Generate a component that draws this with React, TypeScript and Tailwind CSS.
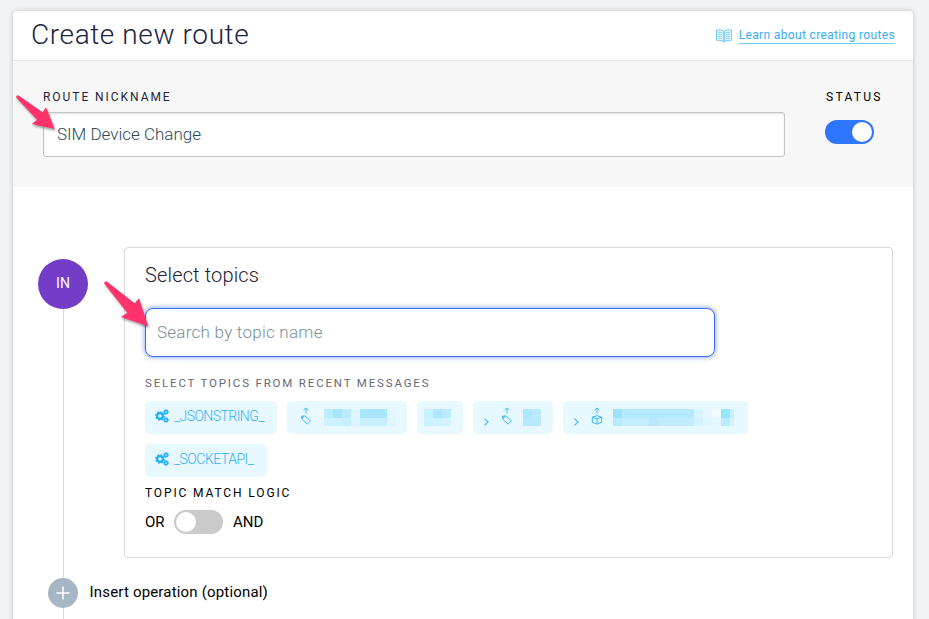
import type { ReactNode } from "react";
import clsx from "clsx";

function GearsIcon() {
  return (
    <svg width="14" height="14" viewBox="0 0 14 14" fill="none" stroke="#1eaefc" aria-hidden="true">
      <circle cx="5" cy="7" r="2.9" strokeWidth="2.2" />
      <circle cx="5" cy="7" r="4.3" strokeWidth="1.1" strokeDasharray="1.8 1.577" />
      <circle cx="11" cy="3" r="1.6" strokeWidth="1.5" />
      <circle cx="11" cy="3" r="2.5" strokeWidth="0.8" strokeDasharray="1.1 0.86" />
      <circle cx="11" cy="11" r="1.6" strokeWidth="1.5" />
      <circle cx="11" cy="11" r="2.5" strokeWidth="0.8" strokeDasharray="1.1 0.86" />
    </svg>
  );
}

function BookIcon() {
  return (
    <svg width="16" height="14" viewBox="0 0 16 14" fill="none" stroke="#4fc0fa" strokeWidth="0.9" aria-hidden="true">
      <path d="M8 2.4C6.3 1.1 3.500.7.6.9v10.400c2.900-.2 5.700.1 7.400 1.400 1.700-1.300 4.500-1.600 7.400-1.400V.9C12.500.7 9.700 1.100 8 2.400z" />
      <path d="M8 2.400v10.800" strokeWidth="1.400" />
      <path d="M2.200 3.100c1.600 0 3 .3 4.200.9M2.200 5.100c1.600 0 3 .3 4.200.9M2.200 7.100c1.600 0 3 .3 4.200.9M2.200 9.100c1.600 0 3 .3 4.200.9M13.800 3.100c-1.600 0-3 .3-4.200.9M13.800 5.100c-1.600 0-3 .3-4.200.9M13.800 7.100c-1.600 0-3 .3-4.200.9M13.800 9.100c-1.600 0-3 .3-4.200.9" />
    </svg>
  );
}

function TagUpIcon() {
  return (
    <svg width="12" height="18" viewBox="0 0 12 18" fill="none" stroke="#43bdf9" aria-hidden="true">
      <path d="M6 6.5V1M3.6 3.2 6 .9l2.400 2.300" />
      <path d="M1.500 9.300 4.700 8.800l5.800 5.100-3.300 3.200-5.300-4.900z" strokeLinejoin="round" />
      <path d="M1.300 9.200 4.900 8.700 2 12.300z" fill="#43bdf9" stroke="none" />
    </svg>
  );
}

function CubeUpIcon() {
  return (
    <svg width="12" height="18" viewBox="0 0 12 18" fill="none" stroke="#35b7fa" aria-hidden="true">
      <path d="M6 6.500V1M3.600 3.200 6 .900l2.400 2.300" />
      <path d="M6 8.600 10.700 10.200v5L6 17.200 1.300 15.200v-5zM1.300 10.200 6 11.800l4.700-1.600M6 11.800v5.400" strokeLinejoin="round" />
    </svg>
  );
}

function ChevronIcon() {
  return (
    <svg width="5" height="8" viewBox="0 0 5 8" fill="none" stroke="#4bc0fb" strokeWidth="1.2" aria-hidden="true">
      <path d="M.6 .8 4 4 .6 7.200" />
    </svg>
  );
}

function Toggle({ on }: { on: boolean }) {
  return (
    <span
      className={clsx(
        "flex h-6 w-[49px] items-center rounded-full px-[2px]",
        on ? "justify-end bg-[#2f76ff]" : "justify-start bg-[#cacaca]",
      )}
    >
      <span className="h-5 w-5 rounded-full bg-white" />
    </span>
  );
}

function Chip({ className, children }: { className?: string; children: ReactNode }) {
  return (
    <span className={clsx("flex h-[33px] items-start overflow-hidden rounded-[5px] bg-[#e8f8ff]", className)}>
      {children}
    </span>
  );
}

type Cell = { w: number; top: string; bottom: string };

// Redacted topic names, one column per block
function Redacted({ cells }: { cells: Cell[] }) {
  return (
    <span className="mt-2 flex">
      {cells.map((cell, i) => (
        <span key={i} style={{ width: cell.w }}>
          <span className="block h-[9px]" style={{ background: cell.top }} />
          <span className="block h-2" style={{ background: cell.bottom }} />
        </span>
      ))}
    </span>
  );
}

const tagTopic: Cell[] = [
  { w: 6, top: "#effaff", bottom: "#e6f7ff" },
  { w: 9, top: "#bdecff", bottom: "#cdf1ff" },
  { w: 9, top: "#a5e5ff", bottom: "#cdf1ff" },
  { w: 9, top: "#b9eaff", bottom: "#c8efff" },
  { w: 9, top: "#e0f6ff", bottom: "#d9f4ff" },
  { w: 27, top: "#a8e6ff", bottom: "#c9f0ff" },
  { w: 9, top: "#e3f6ff", bottom: "#dff5ff" },
];

const shortTopic: Cell[] = [
  { w: 9, top: "#c9f0ff", bottom: "#cff2ff" },
  { w: 9, top: "#aee7ff", bottom: "#cff2ff" },
  { w: 9, top: "#bbebff", bottom: "#d2f3ff" },
];

const squareTopic: Cell[] = [
  { w: 9, top: "#aee7ff", bottom: "#b6e9ff" },
  { w: 9, top: "#b9eaff", bottom: "#b9eaff" },
];

const cubeTopic: Cell[] = [
  { w: 9, top: "#9fe2fd", bottom: "#b7eaff" },
  { w: 27, top: "#b5e9ff", bottom: "#c3eeff" },
  { w: 9, top: "#b5e9ff", bottom: "#b8eaff" },
  { w: 36, top: "#b5e9ff", bottom: "#bfedff" },
  { w: 9, top: "#d8f4ff", bottom: "#d2f2ff" },
  { w: 9, top: "#e6f7ff", bottom: "#dff5ff" },
  { w: 9, top: "#f1fbff", bottom: "#e6f7ff" },
  { w: 9, top: "#97e7fd", bottom: "#bcedff" },
  { w: 4, top: "#c5f0ff", bottom: "#d6f4ff" },
];

function PointerArrows() {
  return (
    <svg
      className="pointer-events-none absolute top-0 left-0 drop-shadow-[1px_2px_1px_rgba(0,0,0,0.35)]"
      width="929"
      height="400"
      viewBox="0 0 929 400"
      fill="#ff326c"
      aria-hidden="true"
    >
      <path d="M16.2 97.4Q15.8 95 18.6 95.4L42.600 112.200 46 107.200 54.700 129 31.700 124 37 119.800z" />
      <path d="M104.200 283.400Q104 281 106.800 281.600L134.500 303.200 139 298.300 148.200 326.200 120.900 317 127.300 312.700z" />
    </svg>
  );
}

export default function App() {
  return (
    <div className="relative h-[619px] w-[929px] overflow-hidden bg-[#f2f3f4] pt-[11px] pl-[13px] font-[Roboto,sans-serif]">
      <main className="h-[640px] w-[900px] rounded-t-[4px] bg-white shadow-[0_0_5px_rgba(0,0,0,0.22)]">
        <header className="flex h-[50px] items-center justify-between border-b border-[#e8e9eb] pr-[18px] pl-[18px]">
          <h1 className="pb-[2px] text-[28px] leading-[46px] font-light tracking-[0.6px] whitespace-nowrap text-[#1a2340]">
            Create new route
          </h1>
          <a className="flex items-center gap-[7px] text-[12px] text-[#36adf6]">
            <BookIcon />
            <span className="border-b border-[#70d3fb] leading-4 tracking-[0.35px] whitespace-nowrap">
              Learn about creating routes
            </span>
          </a>
        </header>

        <section className="flex h-[126px] bg-[#f7f7f7] pt-[28px] pl-[30px]">
          <div className="w-[742px]">
            <div className="h-[23px] text-[12px] leading-4 tracking-[1.95px] text-[#22263b]">ROUTE NICKNAME</div>
            <div className="flex h-[45px] items-center rounded-[3px] border border-[#c4c4c4] bg-white pb-[2px] pl-[13px] shadow-[inset_0_1px_2px_rgba(0,0,0,0.12)]">
              <span className="text-[17px] leading-6 font-light text-[#2a4a56]">SIM Device Change</span>
            </div>
          </div>
          <div className="ml-10">
            <div className="h-[31px] pl-px text-[12px] leading-4 tracking-[2.3px] text-black">STATUS</div>
            <Toggle on />
          </div>
        </section>

        <div className="flex pt-[60px] pl-[25px]">
          <div className="flex w-[50px] flex-col items-center pt-[12px]">
            <span className="flex h-[50px] w-[50px] items-center justify-center rounded-full bg-[#733dc8] pb-[2px] text-[14px] text-white">
              IN
            </span>
            <span className="h-[269px] w-px bg-[#d9d9d9]" />
          </div>

          <section className="ml-[36px] h-[311px] w-[769px] rounded-[4px] border border-[#d9d9d9] pt-[13px] pl-5">
            <h2 className="text-[20px] leading-[28px] font-light tracking-[0.15px] text-[#1d2036]">Select topics</h2>
            <div className="mt-[19px] flex h-[49px] w-[570px] items-center rounded-[8px] border border-[#3d6cf0] bg-white pb-[1px] pl-[11px] shadow-[0_0_4px_1px_rgba(70,115,255,0.55)]">
              <span className="text-[17px] leading-6 font-light tracking-[0.25px] text-[#78919a]">Search by topic name</span>
            </div>
            <div className="mt-[18px] text-[11.5px] leading-4 tracking-[1.83px] text-[#686873]">
              SELECT TOPICS FROM RECENT MESSAGES
            </div>
            <div className="mt-[10px] flex w-[640px] flex-wrap gap-[10px]">
              <Chip className="w-[132px] pt-[8px] pl-[10px]">
                <GearsIcon />
                <span className="-mt-px ml-[5px] text-[14px] leading-4 font-light tracking-[-0.55px] text-[#33aff5]">_JSONSTRING_</span>
              </Chip>
              <Chip className="w-[120px] pl-[13px]">
                <span className="mt-[6px] mr-[6px]"><TagUpIcon /></span>
                <Redacted cells={tagTopic} />
              </Chip>
              <Chip className="w-[46px] pl-[7px]">
                <Redacted cells={shortTopic} />
              </Chip>
              <Chip className="w-[80px] pl-[11px]">
                <span className="mt-[17px] mr-[12px]"><ChevronIcon /></span>
                <span className="mt-[6px] mr-[10px]"><TagUpIcon /></span>
                <Redacted cells={squareTopic} />
              </Chip>
              <Chip className="w-[185px] pl-[11px]">
                <span className="mt-[17px] mr-[12px]"><ChevronIcon /></span>
                <span className="mt-[6px] mr-[10px]"><CubeUpIcon /></span>
                <Redacted cells={cubeTopic} />
              </Chip>
              <Chip className="w-[122px] pt-[8px] pl-[10px]">
                <GearsIcon />
                <span className="-mt-px ml-[5px] text-[14px] leading-4 font-light tracking-[-0.5px] text-[#33aff5]">_SOCKETAPI_</span>
              </Chip>
            </div>
            <div className="mt-[8px] text-[12px] leading-4 tracking-[1.87px] text-black">TOPIC MATCH LOGIC</div>
            <div className="mt-[9px] flex items-center text-[15px] text-black">
              <span className="w-[29px]">OR</span>
              <Toggle on={false} />
              <span className="ml-[10px]">AND</span>
            </div>
          </section>
        </div>

        <div className="flex pl-[35px]">
          <div className="flex w-[30px] flex-col items-center">
            <span className="flex h-[30px] w-[30px] items-center justify-center rounded-full bg-[#a7b6c4]">
              <svg width="14" height="14" viewBox="0 0 14 14" stroke="#fff" strokeWidth="1.5" aria-hidden="true">
                <path d="M7 .5v13M.5 7h13" />
              </svg>
            </span>
            <span className="h-5 w-px bg-[#d9d9d9]" />
          </div>
          <span className="ml-[11.5px] text-[15px] leading-[28px] tracking-[0.18px] text-black">Insert operation (optional)</span>
        </div>
      </main>
      <PointerArrows />
    </div>
  );
}
